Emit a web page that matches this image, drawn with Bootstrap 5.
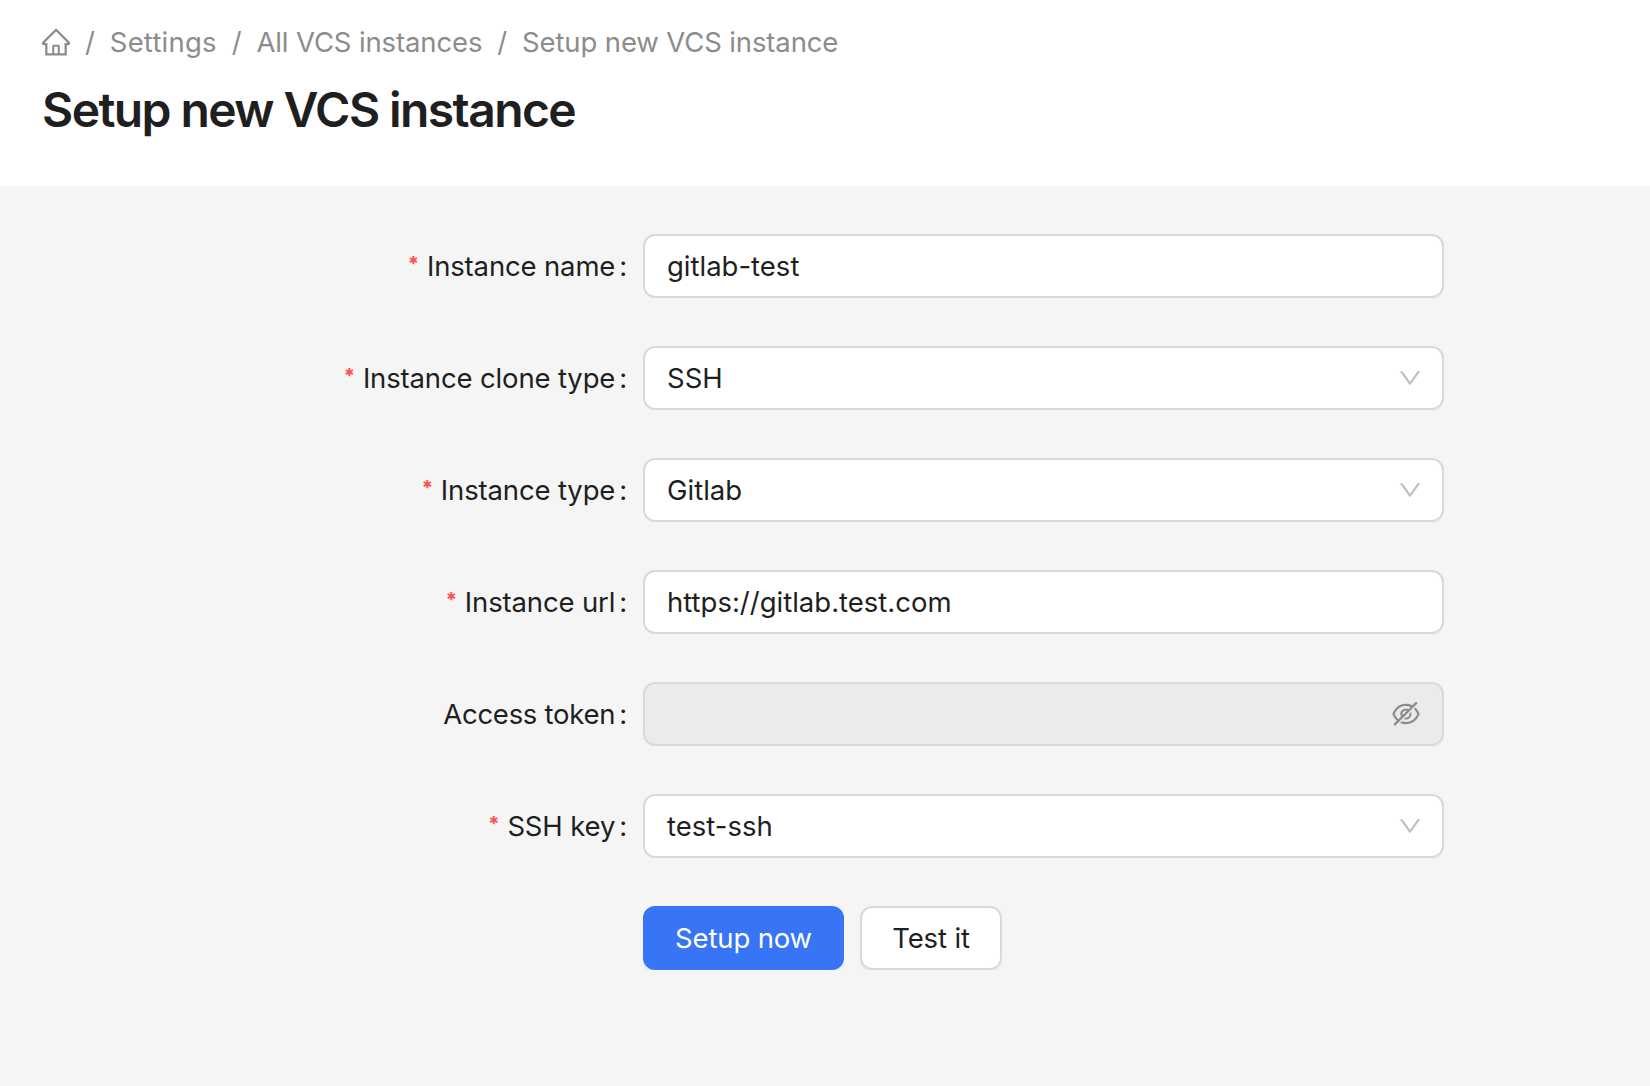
<!DOCTYPE html>
<html lang="en">
<head>
<meta charset="utf-8">
<meta name="viewport" content="width=device-width, initial-scale=1">
<title>Setup new VCS instance</title>
<link href="https://cdn.jsdelivr.net/npm/bootstrap@5.3.0/dist/css/bootstrap.min.css" rel="stylesheet">
<style>
  body { background: #f5f5f5; color: #1f1f1f; font-family: Inter, "Liberation Sans", sans-serif; font-size: 27.5px; line-height: 44px; overflow: hidden; }
  svg { fill: currentColor; display: block; flex: none; }
  .page-head { height: 186px; padding: 20px 42px 0; }
  .breadcrumb { --bs-breadcrumb-divider-color: #8c8c8c; --bs-breadcrumb-item-padding-x: 15px; color: #8c8c8c; line-height: 44px; letter-spacing: -.13px; }
  .breadcrumb-item + .breadcrumb-item::before { padding-right: 15px; }
  .breadcrumb a { color: inherit; }
  .crumb-short { letter-spacing: .2px; }
  .page-title { font-size: 48px; line-height: 64px; font-weight: 600; margin-top: 14px; letter-spacing: -1.58px; }
  .setup-form { padding-top: 48px; }
  .field-row { height: 64px; margin-bottom: 48px; }
  .field-label { width: 643px; padding-right: 16px; letter-spacing: -.15px; }
  .field-label.required::before { content: "*"; color: #ff4d4f; font-size: 20px; font-weight: 700; margin-right: 8px; line-height: 34px; align-self: flex-start; margin-top: 13px; }
  .field-label::after { content: ":"; margin-left: 4px; }
  .label-tight { letter-spacing: -.27px; }
  .field-box { width: 801px; height: 64px; border: 2px solid #d9d9d9; border-radius: 12px; background-color: #fff; color: #1f1f1f; padding: 0 22px; font-size: 27.5px; line-height: 44px; }
  .field-box.is-off { background-color: #ebebeb; }
  .has-arrow { padding-right: 20px; }
  .select-arrow { color: #bfbfbf; }
  .eye { color: #8c8c8c; }
  .form-actions { padding-left: 643px; }
  .btn { --bs-btn-font-size: 27.5px; --bs-btn-border-width: 2px; --bs-btn-border-radius: 12px; --bs-btn-padding-x: 0; --bs-btn-padding-y: 0; height: 64px; line-height: 60px; letter-spacing: -.15px; }
  .btn-primary { --bs-btn-bg: #3875f6; --bs-btn-border-color: #3875f6; width: 201px; box-shadow: 0 4px 0 #e6edf8; }
  .btn-light { --bs-btn-bg: #fff; --bs-btn-border-color: #d9d9d9; --bs-btn-color: #1f1f1f; width: 142px; box-shadow: 0 4px 0 #f0f0f0; }
</style>
<script src="https://cdn.jsdelivr.net/npm/bootstrap@5.3.0/dist/js/bootstrap.bundle.min.js"></script>
</head>
<body>
<svg width="0" height="0" class="d-none">
  <symbol id="down" viewBox="64 64 896 896"><path d="M884 256h-75c-5.100 0-9.900 2.500-12.900 6.600L512 654.200 227.900 262.600c-3-4.100-7.800-6.600-12.900-6.600h-75c-6.500 0-10.300 7.400-6.500 12.700l352.600 486.100c12.800 17.600 39 17.600 51.700 0l352.600-486.100c3.900-5.300.1-12.700-6.400-12.700z"/></symbol>
</svg>
<header class="page-head bg-white">
  <nav aria-label="breadcrumb">
    <ol class="breadcrumb mb-0">
      <li class="breadcrumb-item d-flex align-items-center"><a href="#" aria-label="Home"><svg width="28" height="28" viewBox="64 64 896 896"><path d="M946.500 505L560.100 118.800l-25.900-25.900a31.500 31.500 0 0 0-44.400 0L77.500 505a63.900 63.900 0 0 0-18.800 46c.4 35.200 29.700 63.300 64.900 63.300h42.500V940h691.800V614.300h43.400c17.100 0 33.200-6.700 45.300-18.800a63.600 63.600 0 0 0 18.700-45.300c0-17-6.700-33.100-18.800-45.200zM568 868H456V664h112v204zm217.900-325.700V868H632V640c0-22.100-17.900-40-40-40H432c-22.100 0-40 17.900-40 40v228H238.100V542.300h-96l370-369.700 23.100 23.100L882 542.300h-96.100z"/></svg></a></li>
      <li class="breadcrumb-item"><a href="#" class="text-decoration-none crumb-short">Settings</a></li>
      <li class="breadcrumb-item"><a href="#" class="text-decoration-none">All VCS instances</a></li>
      <li class="breadcrumb-item"><span>Setup new VCS instance</span></li>
    </ol>
  </nav>
  <h1 class="page-title mb-0">Setup new VCS instance</h1>
</header>
<main class="setup-form">
  <div class="field-row d-flex">
    <label class="field-label required d-flex justify-content-end align-items-center" for="name"><span>Instance name</span></label>
    <input id="name" class="field-box form-control" value="gitlab-test">
  </div>
  <div class="field-row d-flex">
    <div class="field-label required d-flex justify-content-end align-items-center"><span>Instance clone type</span></div>
    <div class="field-box has-arrow d-flex align-items-center justify-content-between"><span>SSH</span><svg class="select-arrow" width="24" height="24"><use href="#down"/></svg></div>
  </div>
  <div class="field-row d-flex">
    <div class="field-label required d-flex justify-content-end align-items-center"><span>Instance type</span></div>
    <div class="field-box has-arrow d-flex align-items-center justify-content-between"><span>Gitlab</span><svg class="select-arrow" width="24" height="24"><use href="#down"/></svg></div>
  </div>
  <div class="field-row d-flex">
    <label class="field-label required d-flex justify-content-end align-items-center" for="url"><span>Instance url</span></label>
    <input id="url" class="field-box form-control" value="https://gitlab.test.com">
  </div>
  <div class="field-row d-flex">
    <div class="field-label d-flex justify-content-end align-items-center"><span class="label-tight">Access token</span></div>
    <div class="field-box is-off d-flex align-items-center justify-content-end"><svg class="eye" width="28" height="28" viewBox="64 64 896 896"><path d="M942.200 486.200Q889.470 375.110 816.700 305l-50.880 50.880C807.310 395.530 843.450 447.400 874.700 512 791.500 684.200 673.400 766 512 766q-72.670 0-133.870-22.380L323 798.750Q408 838 512 838q288.300 0 430.200-300.300a60.290 60.290 0 0 0 0-51.500zm-63.570-320.640L836 122.880a8 8 0 0 0-11.320 0L715.310 232.200Q624.860 186 512 186q-288.300 0-430.200 300.300a60.300 60.300 0 0 0 0 51.500q56.690 119.400 136.500 191.410L112.480 835a8 8 0 0 0 0 11.310L155.170 889a8 8 0 0 0 11.310 0l712.150-712.120a8 8 0 0 0 0-11.320zM149.300 512C232.600 339.800 350.700 258 512 258c54.540 0 104.130 9.360 149.120 28.390l-70.300 70.300a176 176 0 0 0-238.130 238.130l-83.420 83.420C223.100 637.490 183.300 582.280 149.300 512zm246.700 0a112.110 112.110 0 0 1 146.200-106.690L401.310 546.200A112 112 0 0 1 396 512z"/><path d="M508 624c-3.460 0-6.870-.16-10.250-.47l-52.820 52.820a176.090 176.090 0 0 0 227.420-227.420l-52.820 52.820c.31 3.380.47 6.790.47 10.250a111.940 111.940 0 0 1-112 112z"/></svg></div>
  </div>
  <div class="field-row d-flex">
    <div class="field-label required d-flex justify-content-end align-items-center"><span>SSH key</span></div>
    <div class="field-box has-arrow d-flex align-items-center justify-content-between"><span>test-ssh</span><svg class="select-arrow" width="24" height="24"><use href="#down"/></svg></div>
  </div>
  <div class="form-actions d-flex gap-3">
    <button type="button" class="btn btn-primary">Setup now</button>
    <button type="button" class="btn btn-light">Test it</button>
  </div>
</main>
</body>
</html>
